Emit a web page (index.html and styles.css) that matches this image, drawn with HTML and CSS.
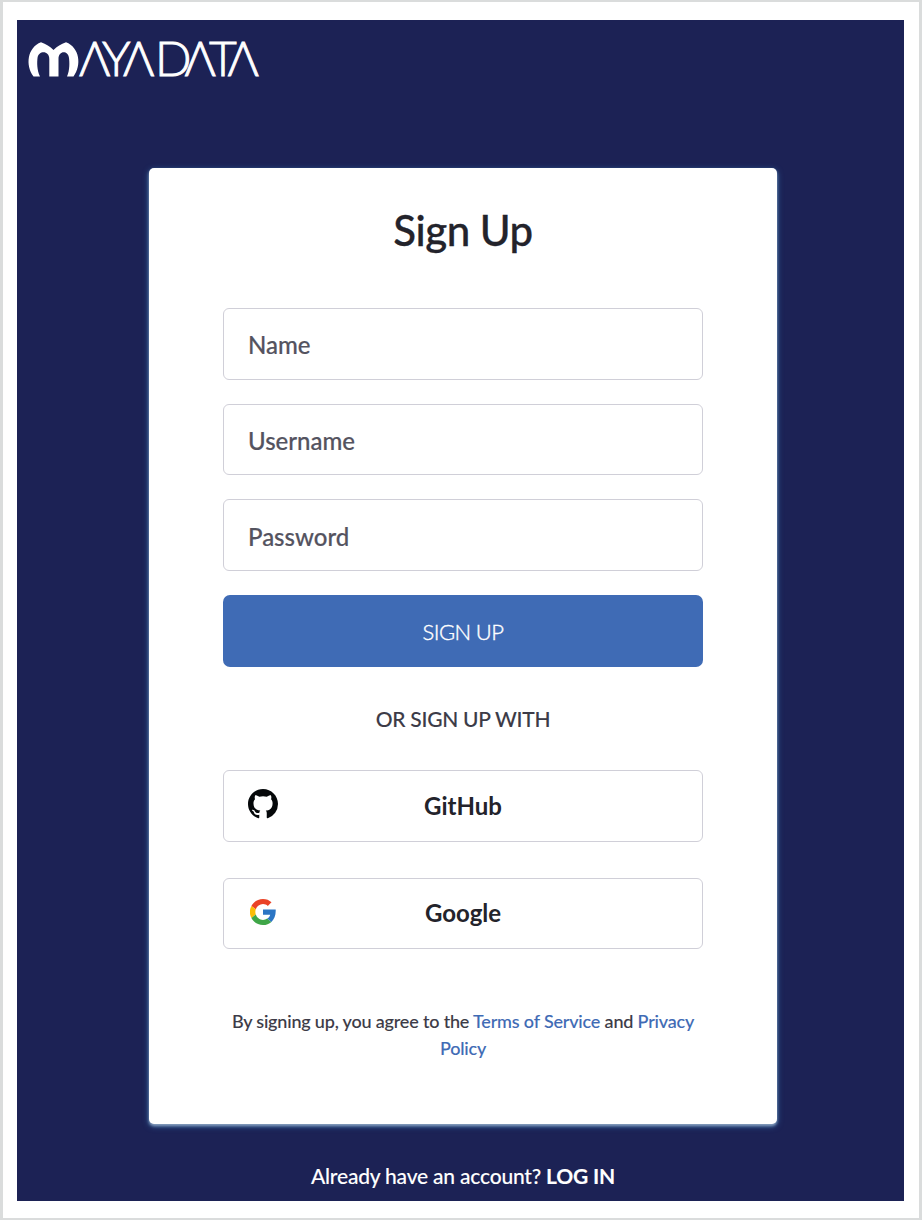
FILE: index.html
```html
<!DOCTYPE html>
<html lang="en">
<head>
<meta charset="utf-8">
<title>MayaData Sign Up</title>
<link rel="stylesheet" href="styles.css">
</head>
<body>
<div class="frame">
  <main class="page">
    <header class="header">
      <svg class="logo" viewBox="0 0 232 44" aria-label="MayaData">
        <path class="logo-mark" d="M5.500 38.500C-3 27-.5 9.500 13 4.300C18 6 22 8.500 25.500 12C29 8.500 33 6 38 4.300C51.500 9.500 54 27 45.500 38.500H39C42 32 41.500 24 41 20C40.300 12.500 30.500 12 30.500 21V38.500H21.300V21C21.300 12 10.300 12.500 9.500 20C9 24 8.800 32 12 38.500Z"/>
        <text class="logo-text" y="38" x="51 74 95 127 156.500 181 199.500">ΛYΛDΛTΛ</text>
      </svg>
    </header>
    <form class="card">
      <h1 class="title">Sign Up</h1>
      <input class="field" type="text" placeholder="Name" aria-label="Name">
      <input class="field" type="text" placeholder="Username" aria-label="Username">
      <input class="field" type="password" placeholder="Password" aria-label="Password">
      <button class="submit" type="button">SIGN UP</button>
      <p class="divider">OR SIGN UP WITH</p>
      <button class="provider" type="button">
        <svg class="icon-github" viewBox="0 0 16 16"><path fill="#05080a" d="M8 0C3.580 0 0 3.580 0 8c0 3.540 2.290 6.530 5.470 7.590.4.070.55-.17.55-.38 0-.19-.01-.82-.01-1.490-2.010.37-2.530-.49-2.690-.94-.09-.23-.48-.94-.82-1.130-.28-.15-.68-.52-.01-.53.63-.01 1.080.58 1.230.82.72 1.210 1.870.87 2.330.66.07-.52.28-.87.51-1.070-1.780-.2-3.640-.89-3.640-3.950 0-.87.31-1.590.82-2.150-.08-.2-.36-1.020.08-2.120 0 0 .67-.21 2.200.82.64-.18 1.320-.27 2-.27s1.360.09 2 .27c1.530-1.040 2.200-.82 2.200-.82.44 1.100.16 1.920.08 2.120.51.56.82 1.270.82 2.150 0 3.070-1.870 3.750-3.650 3.950.29.25.54.73.54 1.480 0 1.070-.01 1.930-.01 2.200 0 .21.15.46.55.38A8.010 8.010 0 0 0 16 8c0-4.420-3.580-8-8-8z"/></svg>
        <span>GitHub</span>
      </button>
      <button class="provider" type="button">
        <svg class="icon-google" viewBox="0 0 26 26"><path fill="#ea4327" d="M13 0C8 0 3.700 2.800 1.400 7l4.400 3.300C7 7.200 9.700 5.100 13 5.100c1.900 0 3.500.7 4.800 1.800l3.700-3.600C19.300 1.200 16.400 0 13 0z"/><path fill="#fbbd08" d="M1.400 7a13 13 0 0 0 0 12l4.400-3.400a8 8 0 0 1 0-5.300z"/><path fill="#3fa648" d="M1.400 19C3.600 23.200 8 26 13 26c3.300 0 6.200-1.100 8.400-3.100l-4.200-3.300c-1.200.8-2.600 1.300-4.200 1.300-3.400 0-6.200-2.200-7.200-5.300z"/><path fill="#2b75c4" d="M13 10.500v5.200h7.200c-.4 1.700-1.500 3-3 3.900l4.200 3.300c2.900-2.600 4.600-6.700 4.300-12.400z"/></svg>
        <span>Google</span>
      </button>
      <p class="terms">By signing up, you agree to the <a class="link">Terms of Service</a> and <a class="link">Privacy Policy</a></p>
    </form>
    <p class="login">Already have an account? <a class="login-link">LOG IN</a></p>
  </main>
</div>
</body>
</html>
```
FILE: styles.css
```css
* { box-sizing: border-box; }
body { margin: 0; background: #fff; font-family: Lato, sans-serif; color: #3c3b47; }
.frame { height: 1220px; border: 2px solid #dadcdc; border-left-width: 3px; border-right-width: 3px; padding: 18px 15px 0 14px; }
.page { width: 887px; height: 1181px; background: #1c2255; padding-left: 132px; }
.header { height: 148px; margin-left: -121px; padding-top: 18px; }
.logo { display: block; width: 232px; height: 44px; overflow: visible; }
.logo-mark { fill: #fff; }
.logo-text { fill: #fff; stroke: #fff; stroke-width: .9px; font-size: 48px; font-weight: 300; }
.card { width: 628px; height: 956px; padding: 35px 74px 0; display: flex; flex-direction: column; background: #fff; border-radius: 5px; box-shadow: 0 2px 3px #8ba0bf, 0 2px 6px #3068a0; }
.title { margin: 0 0 51px; font-size: 42px; line-height: 54px; font-weight: 500; letter-spacing: -.5px; text-align: center; color: #23232b; -webkit-text-stroke: .3px #23232b; }
.field { width: 480px; height: 71.500px; margin: 0 0 24.200px; padding: 2px 24px 0; border: 1.500px solid #d0cfd8; border-radius: 6px; font-family: inherit; font-size: 24px; font-weight: 500; }
.field::placeholder { color: #54535f; opacity: 1; -webkit-text-stroke: .2px #54535f; }
.submit { height: 72px; padding: 0; border: 0; border-radius: 7px; background: #3f6bb5; color: #fff; font-family: inherit; font-size: 22px; font-weight: 300; letter-spacing: -.6px; -webkit-text-stroke: .4px #fff; }
.divider { margin: 38px 0 37px; font-size: 21px; line-height: 28px; font-weight: 500; letter-spacing: -.25px; text-align: center; -webkit-text-stroke: .1px #3c3b47; }
.provider { display: grid; grid-template-columns: 30px 1fr 30px; align-items: center; height: 71.500px; margin-bottom: 36px; padding: 0 24px 1px; border: 1.500px solid #d0cfd8; border-radius: 6px; background: #fff; color: #23232b; font-family: inherit; font-size: 24px; font-weight: 700; }
.icon-github { width: 30px; height: 30px; margin-top: -2px; }
.icon-google { width: 26px; height: 26px; margin: -2px 0 0 2px; }
.terms { margin: 23px 0 0; font-size: 18px; line-height: 27px; font-weight: 500; letter-spacing: -.18px; text-align: center; -webkit-text-stroke: .1px; }
.link { color: #3f6bb5; }
.login { width: 628px; margin: 38px 0 0; font-size: 21px; line-height: 28px; font-weight: 500; letter-spacing: -.2px; text-align: center; color: #fff; -webkit-text-stroke: .1px; }
.login-link { font-weight: 700; }
```
